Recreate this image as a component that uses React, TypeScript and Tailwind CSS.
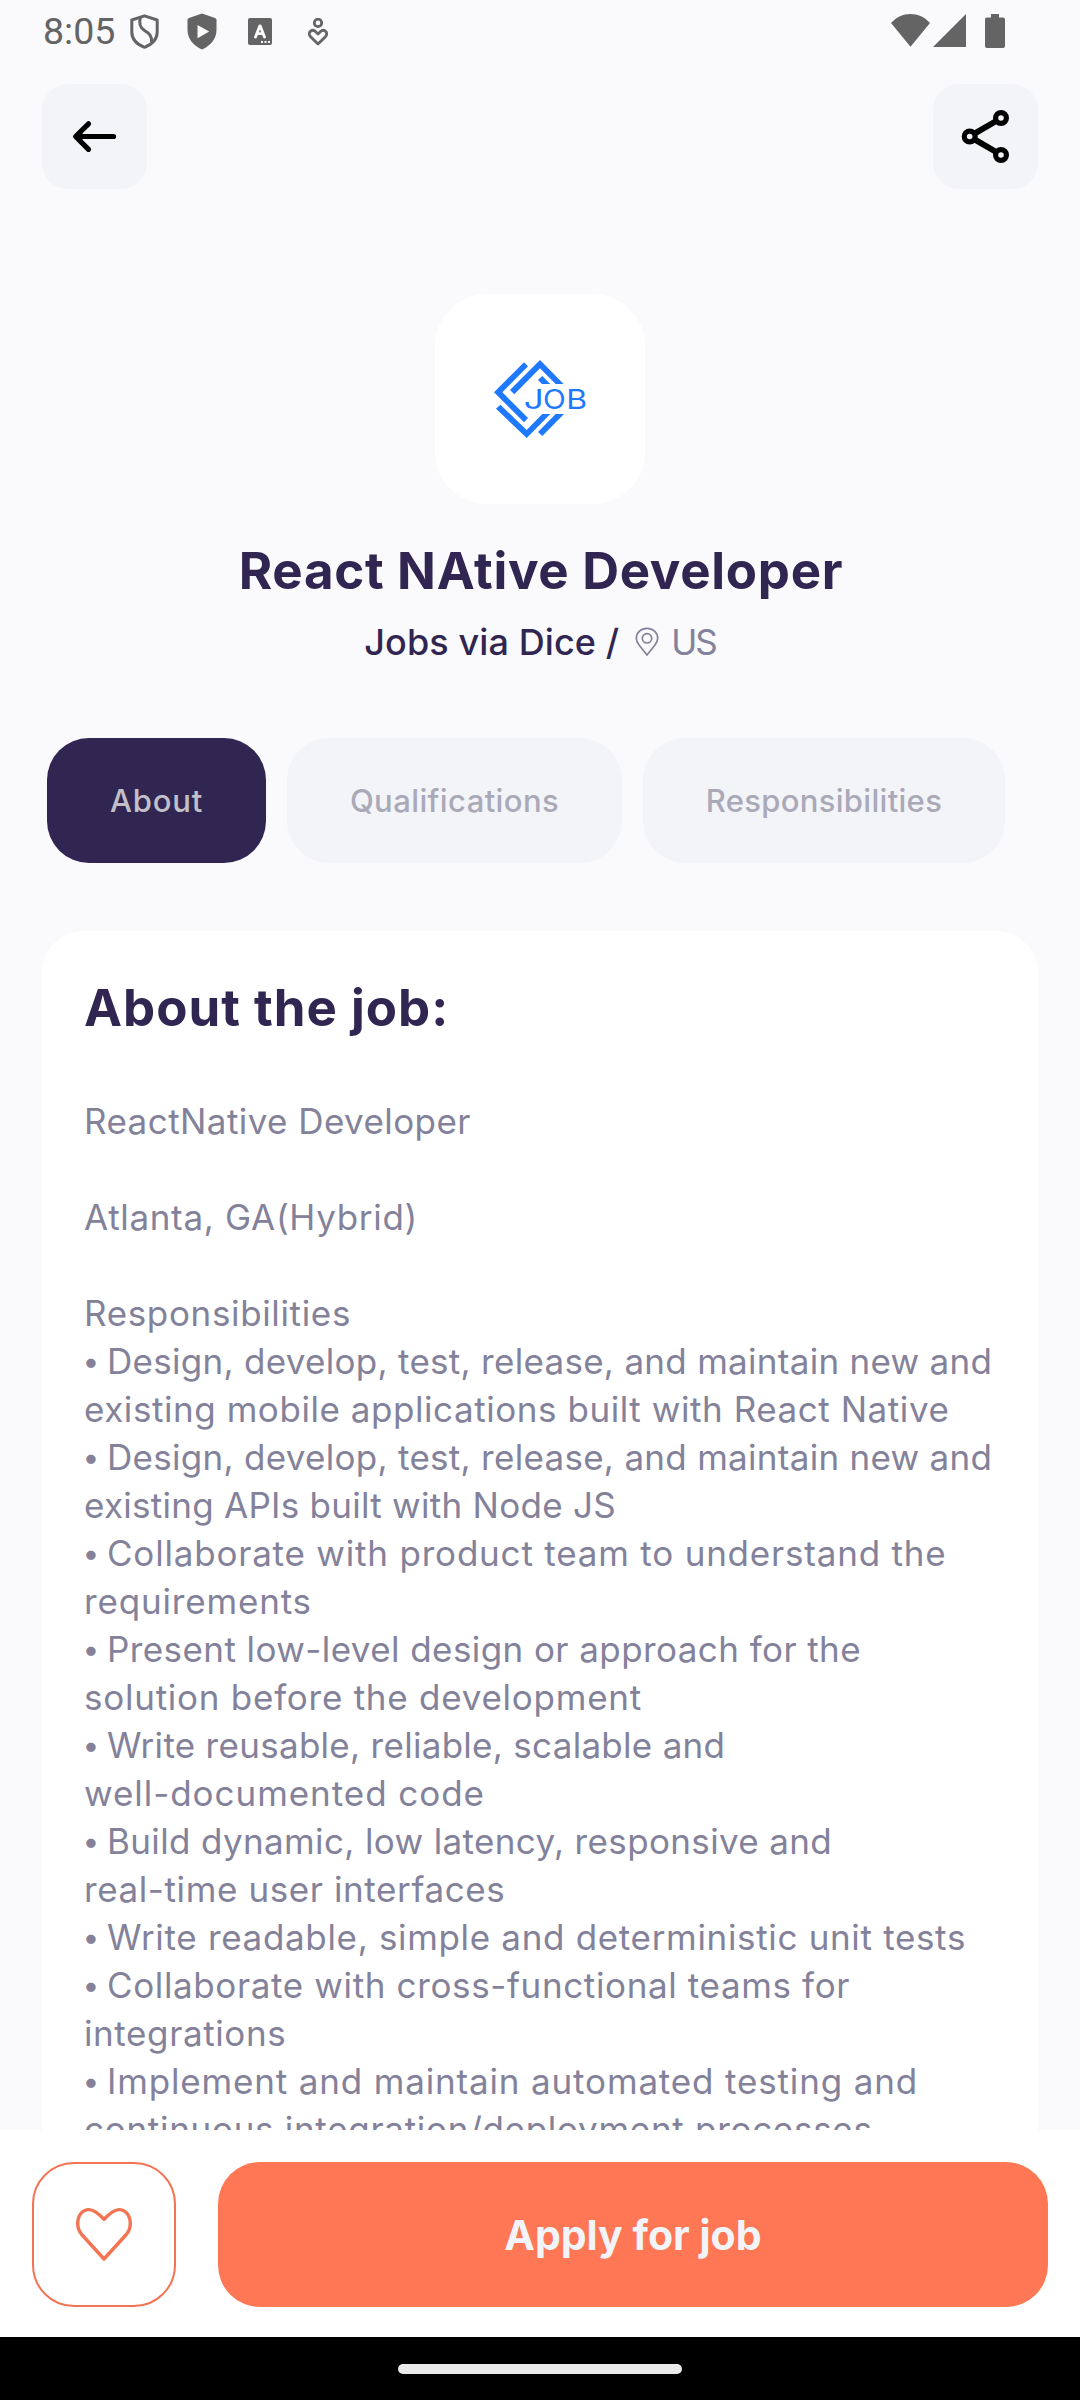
type Line = { text: string; tracking: string; bullet?: boolean };

const DESCRIPTION: Line[] = [
  { text: "ReactNative Developer", tracking: "tracking-[0.43px]" },
  { text: "", tracking: "" },
  { text: "Atlanta, GA(Hybrid)", tracking: "tracking-[0.68px]" },
  { text: "", tracking: "" },
  { text: "Responsibilities", tracking: "tracking-[0.65px]" },
  { bullet: true, text: "Design, develop, test, release, and maintain new and", tracking: "tracking-[0.29px]" },
  { text: "existing mobile applications built with React Native", tracking: "tracking-[0.56px]" },
  { bullet: true, text: "Design, develop, test, release, and maintain new and", tracking: "tracking-[0.29px]" },
  { text: "existing APIs built with Node JS", tracking: "tracking-[0.27px]" },
  { bullet: true, text: "Collaborate with product team to understand the", tracking: "tracking-[0.8px]" },
  { text: "requirements", tracking: "tracking-[0.83px]" },
  { bullet: true, text: "Present low-level design or approach for the", tracking: "tracking-[0.42px]" },
  { text: "solution before the development", tracking: "tracking-[0.75px]" },
  { bullet: true, text: "Write reusable, reliable, scalable and", tracking: "tracking-[0.29px]" },
  { text: "well-documented code", tracking: "tracking-[0.95px]" },
  { bullet: true, text: "Build dynamic, low latency, responsive and", tracking: "tracking-[0.36px]" },
  { text: "real-time user interfaces", tracking: "tracking-[0.6px]" },
  { bullet: true, text: "Write readable, simple and deterministic unit tests", tracking: "tracking-[0.67px]" },
  { bullet: true, text: "Collaborate with cross-functional teams for", tracking: "tracking-[0.63px]" },
  { text: "integrations", tracking: "tracking-[0.6px]" },
  { bullet: true, text: "Implement and maintain automated testing and", tracking: "tracking-[0.84px]" },
  { text: "continuous integration/deployment processes", tracking: "tracking-[0.71px]" },
];

function StatusBar() {
  return (
    <div className="flex h-[84px] items-start justify-between pl-[43px] pr-[75px] pt-[9px] text-[#646464]">
      <div className="flex items-start">
        <span className="w-[87px] font-[Roboto] text-[37.5px] leading-[44px]">8:05</span>
        <svg className="mt-[5px] h-[35px] w-[29px]" viewBox="0 0 29 35" fill="none" stroke="currentColor" strokeWidth="3">
          <path d="M14.5 1.8 27.2 6v12c0 7-5.2 12.400-12.700 15.300C7 30.400 1.800 25 1.800 18V6z" strokeLinejoin="round" />
          <path d="M10.500 3c-1.800 6-.8 10.500 4 13.500 5 3 7.500 5.500 7 11.500" />
        </svg>
        <svg className="ml-[28px] mt-[4px] h-[37px] w-[30px]" viewBox="0 0 30 37">
          <path fill="currentColor" d="M15 .5 28 5q1.500.6 1.500 2.200V17c0 9-6 15.500-14.500 19.500C6.500 32.500.5 26 .5 17V7.200Q.5 5.600 2 5z" />
          <path fill="#FAFAFC" d="M10.500 12v13.200l11.700-6.600z" />
        </svg>
        <svg className="ml-[31px] mt-[9px] h-[27px] w-[24px]" viewBox="0 0 24 27">
          <rect width="24" height="27" rx="2" fill="currentColor" />
          <path d="m7.500 19 4.300-11h.4l4.300 11M8.900 15.600h6.200" fill="none" stroke="#FAFAFC" strokeWidth="2.900" strokeLinecap="round" strokeLinejoin="round" />
          <path d="M13 23h2v2h-2zM16.500 23h2v2h-2zM20 23h2v2h-2z" fill="#FAFAFC" />
        </svg>
        <svg className="ml-[36px] mt-[9px] h-[28px] w-[20px]" viewBox="0 0 20 28" fill="none" stroke="currentColor" strokeWidth="2.800">
          <circle cx="10" cy="4.900" r="3.700" />
          <path d="M10 26 2.600 18.800C.8 17 1 14.500 2.600 13.200c1.600-1.200 3.600-.9 4.800.3L10 16l2.600-2.500c1.200-1.200 3.200-1.500 4.800-.3 1.600 1.300 1.800 3.800 0 5.600z" strokeLinejoin="round" />
        </svg>
      </div>
      <div className="mt-[5px] flex items-start">
        <svg className="h-[33px] w-[39px]" viewBox="0 0 39 33" fill="currentColor">
          <path d="M0 9C5.500 3 12 0 19.500 0S33.500 3 39 9L19.500 32.700z" />
        </svg>
        <svg className="ml-[3px] h-[33px] w-[33px]" viewBox="0 0 33 33" fill="currentColor">
          <path d="M33 0v33H0z" />
        </svg>
        <svg className="ml-[19px] h-[34px] w-[20px]" viewBox="0 0 20 34" fill="currentColor">
          <path d="M6 0h8v3.500h4a2 2 0 0 1 2 2V32a2 2 0 0 1-2 2H2a2 2 0 0 1-2-2V5.500a2 2 0 0 1 2-2h4z" />
        </svg>
      </div>
    </div>
  );
}

function Header() {
  return (
    <header className="flex justify-between px-[42px]">
      <button className="flex size-[105px] items-center justify-center rounded-[26px] bg-[#F3F4F8]" aria-label="Back">
        <svg className="size-[105px]" viewBox="0 0 105 105" fill="none" stroke="#000" strokeWidth="5.200" strokeLinecap="round" strokeLinejoin="round">
          <path d="M71.500 52.500H34M46.500 39.800 33.600 52.500l12.900 12.800" />
          <path d="m34 52.500 6-4.500v9z" fill="#000" strokeWidth="1" />
        </svg>
      </button>
      <button className="flex size-[105px] items-center justify-center rounded-[26px] bg-[#F3F4F8]" aria-label="Share">
        <svg className="size-[105px]" viewBox="0 0 105 105" fill="none" stroke="#000" strokeWidth="5.200">
          <circle cx="68" cy="34" r="5.400" />
          <circle cx="36.700" cy="52.500" r="5.400" />
          <circle cx="68" cy="71" r="5.400" />
          <path d="M41.500 49.700 63.200 37M41.500 55.300 63.200 68" strokeWidth="6" />
        </svg>
      </button>
    </header>
  );
}

function CompanyLogo() {
  return (
    <div className="mt-[105px] size-[210px] overflow-hidden rounded-[52px] bg-white">
      <svg className="size-[210px]" viewBox="45 42 630 630" fill="#1F79FF">
        <path d="M312 247 324 259 247 337 324 414 312 427 222 337z" />
        <path d="M270 330 360 240 431 312H407L360 265 283 343z" />
        <path d="M367 288 391 312H366L354 300z" />
        <path d="M241 374 320 450 367 402H391L320 474 228 386z" />
        <path d="M407 402H432L367 468 354 456z" />
        <g fontFamily="Inter" fontSize="81" fontWeight="400">
          <text transform="translate(311 387) scale(1.300 1)">J</text>
          <text transform="translate(369 387) scale(1.100 1)">O</text>
          <text transform="translate(439 387) scale(1.180 1)">B</text>
        </g>
      </svg>
    </div>
  );
}

function Tabs() {
  return (
    <nav className="mt-[72px] flex h-[125px] gap-[21px] self-stretch pl-[47px] text-[31px] font-medium">
      <button className="w-[219px] rounded-[42px] bg-[#312651] pt-[2px] tracking-[0.8px] text-[#C1C0C8]">About</button>
      <button className="w-[335px] rounded-[42px] bg-[#F3F4F8] pt-[2px] tracking-[0.4px] text-[#AAA9B8]">Qualifications</button>
      <button className="w-[362px] rounded-[42px] bg-[#F3F4F8] pt-[2px] tracking-[0.3px] text-[#AAA9B8]">Responsibilities</button>
    </nav>
  );
}

export default function App() {
  return (
    <div className="flex h-[2400px] w-[1080px] flex-col overflow-hidden bg-[#FAFAFC] font-[Inter,sans-serif] text-[#312651]">
      <main className="h-[2130px] overflow-hidden">
        <StatusBar />
        <Header />
        <section className="flex flex-col items-center">
          <CompanyLogo />
          <h1 className="mt-[37px] whitespace-nowrap pl-[2px] text-[51px] font-bold leading-[60px] tracking-[0.7px]">React NAtive Developer</h1>
          <div className="mt-[17px] flex h-[48px] items-center whitespace-nowrap text-[35px] leading-[48px]">
            <span className="text-[36px] font-medium tracking-[0.1px]">Jobs via Dice /</span>
            <svg className="ml-[16px] h-[30px] w-[24px]" viewBox="0 0 24 30" fill="none" stroke="#83829A" strokeWidth="1.700">
              <path d="M12 28 4.200 18.200C2.300 15.800 1.300 13.600 1.300 11.200a10.700 9.900 0 0 1 21.400 0c0 2.400-1 4.600-2.900 7z" strokeLinejoin="round" />
              <circle cx="12" cy="11.300" r="4.700" />
            </svg>
            <span className="ml-[12px] tracking-[-2px] text-[#83829A]">US</span>
          </div>
          <Tabs />
        </section>
        <section className="mx-[42px] mt-[68px] rounded-t-[42px] bg-white px-[42px] pt-[47px]">
          <h2 className="text-[51px] font-bold leading-[60px] tracking-[1px]">About the job:</h2>
          <div className="mt-[59px] whitespace-nowrap text-[35px] leading-[48px] text-[#83829A]">
            {DESCRIPTION.map((line, i) => (
              <p key={i} className={`flex h-[48px] ${line.tracking}`}>
                {line.bullet && <span className="-ml-[1.5px] w-[24.5px] whitespace-pre text-[30px]">{"• "}</span>}
                <span>{line.text}</span>
              </p>
            ))}
          </div>
        </section>
      </main>
      <footer className="flex h-[207px] items-start bg-white px-[32px] pt-[32px]">
        <button className="flex h-[145px] w-[144px] items-center justify-center rounded-[42px] border-[2.600px] border-[#F37453]" aria-label="Save">
          <svg className="h-[56px] w-[58px]" viewBox="0 0 58 56" fill="none" stroke="#F37453" strokeWidth="3.400">
            <path d="M29 12.200C24 7 19 2.600 14 2.600 7.500 2.600 2.700 8.500 2.700 16.500c0 4.500 1.500 8 4 11L29 52 51.300 27.500c2.500-3 4-6.500 4-11C55.300 8.500 50.500 2.600 44 2.600c-5 0-10 4.400-15 9.600z" strokeLinejoin="round" />
          </svg>
        </button>
        <button className="ml-[42px] h-[145px] w-[831px] rounded-[42px] bg-[#FF7754] pt-[3px] text-[41px] font-bold text-[#F3F4F8]">
          Apply for job
        </button>
      </footer>
      <div className="flex h-[63px] justify-center bg-black pt-[27px]">
        <div className="h-[10px] w-[284px] rounded-full bg-[#EBEBEB]" />
      </div>
    </div>
  );
}
